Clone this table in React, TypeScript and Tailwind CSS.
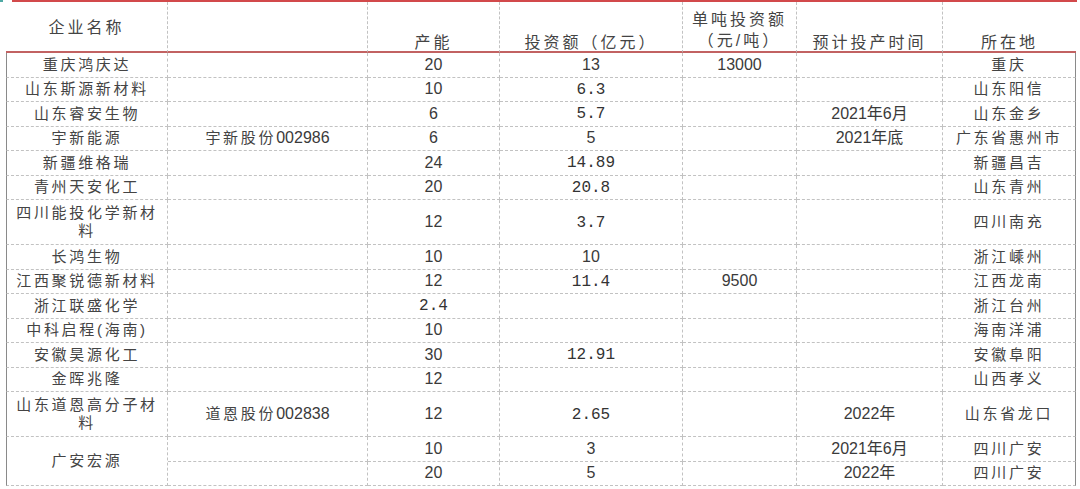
import React from "react";

type Row = {
  name?: string;
  stock?: string;
  cap: string;
  inv?: string;
  perTon?: string;
  time?: string;
  loc: string;
  tall?: boolean;
};

const rows: Row[] = [
  { name: "重庆鸿庆达", cap: "20", inv: "13", perTon: "13000", loc: "重庆" },
  { name: "山东斯源新材料", cap: "10", inv: "6.3", loc: "山东阳信" },
  { name: "山东睿安生物", cap: "6", inv: "5.7", time: "2021年6月", loc: "山东金乡" },
  { name: "宇新能源", stock: "宇新股份|002986", cap: "6", inv: "5", time: "2021年底", loc: "广东省惠州市" },
  { name: "新疆维格瑞", cap: "24", inv: "14.89", loc: "新疆昌吉" },
  { name: "青州天安化工", cap: "20", inv: "20.8", loc: "山东青州" },
  { name: "四川能投化学新材料", cap: "12", inv: "3.7", loc: "四川南充", tall: true },
  { name: "长鸿生物", cap: "10", inv: "10", loc: "浙江嵊州" },
  { name: "江西聚锐德新材料", cap: "12", inv: "11.4", perTon: "9500", loc: "江西龙南" },
  { name: "浙江联盛化学", cap: "2.4", loc: "浙江台州" },
  { name: "中科启程(海南)", cap: "10", loc: "海南洋浦" },
  { name: "安徽昊源化工", cap: "30", inv: "12.91", loc: "安徽阜阳" },
  { name: "金晖兆隆", cap: "12", loc: "山西孝义" },
  { name: "山东道恩高分子材料", stock: "道恩股份|002838", cap: "12", inv: "2.65", time: "2022年", loc: "山东省龙口", tall: true },
];

// 广安宏源 spans two rows in the name column
const guangan: Row[] = [
  { cap: "10", inv: "3", time: "2021年6月", loc: "四川广安" },
  { cap: "20", inv: "5", time: "2022年", loc: "四川广安" },
];

const cell =
  "border-r border-b border-dashed border-[#c2c2c2] p-0 text-center align-middle leading-[18px] overflow-hidden";
const cjk = "tracking-[2.7px] text-[15px] leading-[18px] text-[#444]";

function Num({ v }: { v?: string }) {
  if (!v) return null;
  // decimals are set in the narrow mono face, like the source sheet
  if (v.includes(".")) {
    return <span className="font-['Liberation_Mono',monospace] text-[16px] text-[#333]">{v}</span>;
  }
  return <span className="text-[16px]">{v}</span>;
}

function Time({ v }: { v?: string }) {
  if (!v) return null;
  return <span className="text-[16px] font-normal">{v}</span>;
}

function Stock({ v }: { v?: string }) {
  if (!v) return null;
  const [cn, code] = v.split("|");
  return (
    <span>
      <span className={cjk}>{cn}</span>
      <span className="text-[16px]">{code}</span>
    </span>
  );
}

function BodyRow({ r, first, nameSpan }: { r: Row; first?: boolean; nameSpan?: number }) {
  return (
    <tr className={r.tall ? "h-[45px]" : "h-[24.5px]"}>
      {first && (
        <td
          rowSpan={nameSpan ?? 1}
          className={`${cell} border-l [border-left-style:solid] border-l-[#8a8a8a] px-[8px]`}
        >
          <span className={cjk}>{r.name}</span>
        </td>
      )}
      <td className={cell}>
        <Stock v={r.stock} />
      </td>
      <td className={cell}>
        <Num v={r.cap} />
      </td>
      <td className={cell}>
        <Num v={r.inv} />
      </td>
      <td className={cell}>
        <Num v={r.perTon} />
      </td>
      <td className={cell}>
        <Time v={r.time} />
      </td>
      <td className={`${cell} [border-right-style:solid] border-r-[#8a8a8a]`}>
        <span className={cjk}>{r.loc}</span>
      </td>
    </tr>
  );
}

export default function App() {
  const head =
    "border-r border-dashed border-[#c2c2c2] border-b-2 [border-bottom-style:solid] border-b-[#c26262] p-0 text-center align-bottom text-[16px] tracking-[3px] leading-[16px] font-normal text-[#444]";
  return (
    <div className="w-[1080px] h-[489px] overflow-hidden bg-white text-[#3a3a3a] font-['Liberation_Sans','Noto_Sans_CJK_SC',sans-serif]">
      <div className="flex h-[2px] items-start">
        <div className="w-[3px] h-[2px] bg-[#4fa9a4]" />
        <div className="w-[9px]" />
        <div className="flex-1 h-[2px] bg-[#d2494b]" />
        <div className="w-[3px]" />
      </div>
      <table className="ml-[6px] table-fixed border-separate border-spacing-0 w-[1070px]">
        <colgroup>
          <col className="w-[162px]" />
          <col className="w-[200px]" />
          <col className="w-[132px]" />
          <col className="w-[183px]" />
          <col className="w-[114px]" />
          <col className="w-[146px]" />
          <col className="w-[133px]" />
        </colgroup>
        <thead>
          <tr className="h-[51px]">
            <th className={`${head} !align-middle pt-[2px]`}>企业名称</th>
            <th className={head}></th>
            <th className={head}>产能</th>
            <th className={head}>投资额（亿元）</th>
            <th className={`${head} !leading-[21px]`}>
              单吨投资额
              <br />
              （元/吨）
            </th>
            <th className={head}>预计投产时间</th>
            <th className={`${head} border-r-0`}>所在地</th>
          </tr>
        </thead>
        <tbody>
          {rows.map((r, i) => (
            <BodyRow key={i} r={r} first />
          ))}
          <BodyRow r={{ ...guangan[0], name: "广安宏源" }} first nameSpan={2} />
          <BodyRow r={guangan[1]} />
        </tbody>
      </table>
    </div>
  );
}
